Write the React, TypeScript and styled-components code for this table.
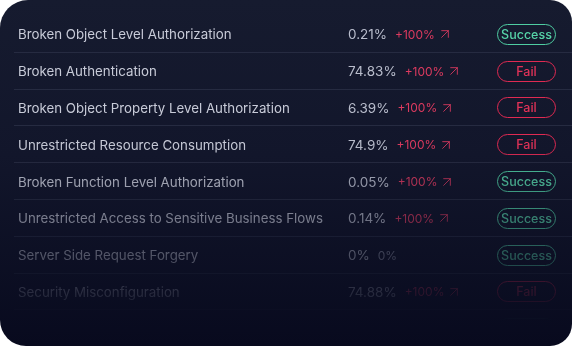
import styled, { createGlobalStyle } from 'styled-components';
import { ArrowUpRight } from 'lucide-react';

const GlobalStyle = createGlobalStyle`
    html, body {
        margin: 0;
        padding: 0;
        background: #ffffff;
    }
    body {
        font-family: Inter, 'Noto Sans', sans-serif;
    }
`;

const Card = styled.div`
    width: 572px;
    height: 346px;
    box-sizing: border-box;
    border-radius: 28px 22px 22px 26px;
    background: linear-gradient(180deg, #161b2f 0%, #12162b 45%, #080a1e 100%);
    overflow: hidden;
    padding: 16px 0 0 14px;
`;

const List = styled.div`
    display: flex;
    flex-direction: column;
    mask-image: linear-gradient(180deg, #000 0px, #000 125px, transparent 306px);
    -webkit-mask-image: linear-gradient(180deg, #000 0px, #000 125px, transparent 306px);
`;

const Row = styled.div`
    display: grid;
    grid-template-columns: 330px 149px 59px;
    align-items: center;
    height: 36.8px;
    box-sizing: border-box;
    padding: 1px 0 0 4px;
    border-bottom: 1px solid #262b41;
`;

const Name = styled.span`
    font-size: 13.3px;
    color: #c8cbd8;
    white-space: nowrap;
`;

const Metric = styled.div`
    display: flex;
    align-items: center;
    gap: 8px;
`;

const Value = styled.span`
    font-size: 13.5px;
    color: #b9bdcc;
`;

const Delta = styled.span<{ $flat?: boolean }>`
    display: flex;
    align-items: center;
    gap: 2px;
    font-size: 12px;
    color: ${(p) => (p.$flat ? '#8b8fa3' : '#dc3a5f')};
`;

const Badge = styled.span<{ $ok: boolean }>`
    display: flex;
    align-items: center;
    justify-content: center;
    height: 21px;
    box-sizing: border-box;
    border-radius: 11px;
    border: 1.5px solid ${(p) => (p.$ok ? '#4fcda2' : '#df2a52')};
    color: ${(p) => (p.$ok ? '#56d3a8' : '#e23258')};
    font-size: 12.5px;
    font-weight: 500;
`;

type Item = { name: string; value: string; delta: string | null; ok: boolean };

const items: Item[] = [
    { name: 'Broken Object Level Authorization', value: '0.21%', delta: '+100%', ok: true },
    { name: 'Broken Authentication', value: '74.83%', delta: '+100%', ok: false },
    { name: 'Broken Object Property Level Authorization', value: '6.39%', delta: '+100%', ok: false },
    { name: 'Unrestricted Resource Consumption', value: '74.9%', delta: '+100%', ok: false },
    { name: 'Broken Function Level Authorization', value: '0.05%', delta: '+100%', ok: true },
    { name: 'Unrestricted Access to Sensitive Business Flows', value: '0.14%', delta: '+100%', ok: true },
    { name: 'Server Side Request Forgery', value: '0%', delta: null, ok: true },
    { name: 'Security Misconfiguration', value: '74.88%', delta: '+100%', ok: false },
    { name: 'Improper Inventory Management', value: '0.02%', delta: '+100%', ok: true },
];

export default function App() {
    return (
        <>
            <GlobalStyle />
            <Card>
                <List>
                    {items.map((it) => (
                        <Row key={it.name}>
                            <Name>{it.name}</Name>
                            <Metric>
                                <Value>{it.value}</Value>
                                {it.delta ? (
                                    <Delta>
                                        {it.delta}
                                        <ArrowUpRight size={16} strokeWidth={1.3} />
                                    </Delta>
                                ) : (
                                    <Delta $flat>0%</Delta>
                                )}
                            </Metric>
                            <Badge $ok={it.ok}>{it.ok ? 'Success' : 'Fail'}</Badge>
                        </Row>
                    ))}
                </List>
            </Card>
        </>
    );
}
